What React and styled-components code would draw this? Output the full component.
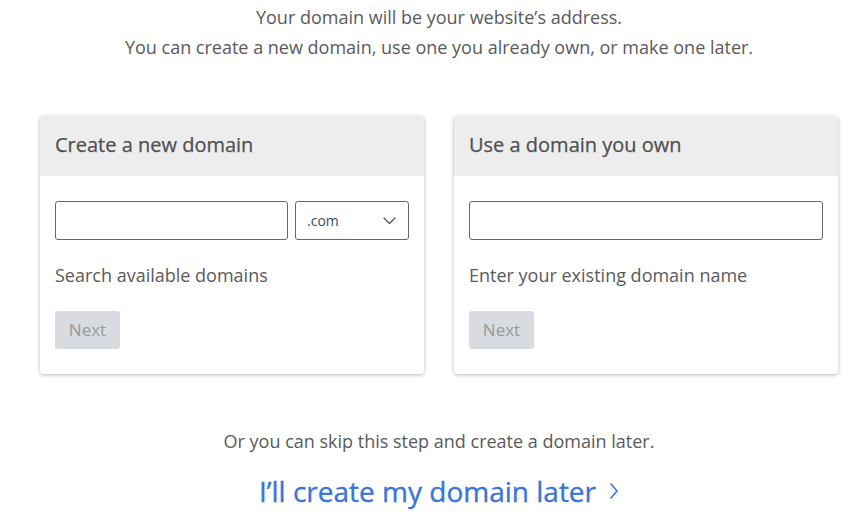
import React from "react";
import styled, { createGlobalStyle } from "styled-components";

const Global = createGlobalStyle`
  html, body { margin: 0; padding: 0; background: #fff; }
  body { font-family: "Open Sans", "Noto Sans", sans-serif; color: #5a5a5a; }
  * { box-sizing: border-box; }
`;

const Page = styled.div`
  width: 798px;
  margin-left: 40px;
  padding-top: 2px;
  display: flex;
  flex-direction: column;
  align-items: center;
`;

const Intro = styled.p`
  margin: 0;
  font-size: 18px;
  line-height: 30px;
  text-align: center;
  color: #5a5a5a;
`;

const Cards = styled.div`
  margin-top: 54px;
  width: 100%;
  display: grid;
  grid-template-columns: 384px 384px;
  gap: 30px;
`;

const Card = styled.section`
  background: #fff;
  border-radius: 4px;
  box-shadow: 0 1px 4px rgba(0, 0, 0, 0.28);
  overflow: hidden;
  height: 258px;
  display: flex;
  flex-direction: column;
`;

const CardHeader = styled.h2`
  margin: 0;
  height: 60px;
  padding: 0 15px 3px;
  display: flex;
  align-items: center;
  background: #ededed;
  font-size: 20px;
  font-weight: 400;
  color: #505050;
  -webkit-text-stroke: 0.25px #505050;
`;

const CardBody = styled.div`
  padding: 25px 15px 0 15px;
  display: flex;
  flex-direction: column;
`;

const FieldRow = styled.div`
  display: flex;
  gap: 7px;
`;

const TextInput = styled.input`
  flex: 1;
  height: 39px;
  border: 1px solid #5f6878;
  border-radius: 3px;
  font: inherit;
  padding: 0 12px;
  outline: none;
`;

const SelectBox = styled.div`
  width: 114px;
  height: 39px;
  border: 1px solid #5f6878;
  border-radius: 3px;
  display: flex;
  align-items: center;
  justify-content: space-between;
  padding: 0 12px 0 11px;
  font-size: 14px;
  color: #3e4a5c;
`;

const Hint = styled.p`
  margin: 23px 0 0;
  font-size: 18px;
  line-height: 24px;
  color: #5a5a5a;
`;

const NextButton = styled.button`
  margin-top: 24px;
  width: 65px;
  height: 38px;
  border: none;
  border-radius: 3px;
  background: #d8dbdf;
  color: #9a9a9a;
  font-family: inherit;
  font-size: 17px;
  padding: 0 0 2px;
`;

const Skip = styled.p`
  margin: 52px 0 0;
  font-size: 18px;
  line-height: 30px;
  text-align: center;
  color: #5a5a5a;
`;

const LaterLink = styled.a`
  margin-top: 15px;
  display: flex;
  align-items: center;
  gap: 13px;
  font-size: 28px;
  font-weight: 400;
  line-height: 40px;
  color: #3b74d7;
  -webkit-text-stroke: 0.35px #3b74d7;
  text-decoration: none;
`;

const Chevron = ({ w, h, d, sw }) => (
  <svg width={w} height={h} viewBox={`0 0 ${w} ${h}`} fill="none">
    <path d={d} stroke="currentColor" strokeWidth={sw} strokeLinecap="round" strokeLinejoin="round" />
  </svg>
);

export default function App() {
  return (
    <>
      <Global />
      <Page>
        <Intro>Your domain will be your website’s address.</Intro>
        <Intro>You can create a new domain, use one you already own, or make one later.</Intro>
        <Cards>
          <Card>
            <CardHeader>Create a new domain</CardHeader>
            <CardBody>
              <FieldRow>
                <TextInput aria-label="Domain name" />
                <SelectBox>
                  <span>.com</span>
                  <Chevron w={13} h={8} sw={1.1} d="M1 1 L6.5 6.5 L12 1" />
                </SelectBox>
              </FieldRow>
              <Hint>Search available domains</Hint>
              <div><NextButton>Next</NextButton></div>
            </CardBody>
          </Card>
          <Card>
            <CardHeader>Use a domain you own</CardHeader>
            <CardBody>
              <FieldRow>
                <TextInput aria-label="Existing domain" />
              </FieldRow>
              <Hint>Enter your existing domain name</Hint>
              <div><NextButton>Next</NextButton></div>
            </CardBody>
          </Card>
        </Cards>
        <Skip>Or you can skip this step and create a domain later.</Skip>
        <LaterLink href="#">
          <span>I’ll create my domain later</span>
          <Chevron w={10} h={18} sw={1.6} d="M2 2 L8 9 L2 16" />
        </LaterLink>
      </Page>
    </>
  );
}
